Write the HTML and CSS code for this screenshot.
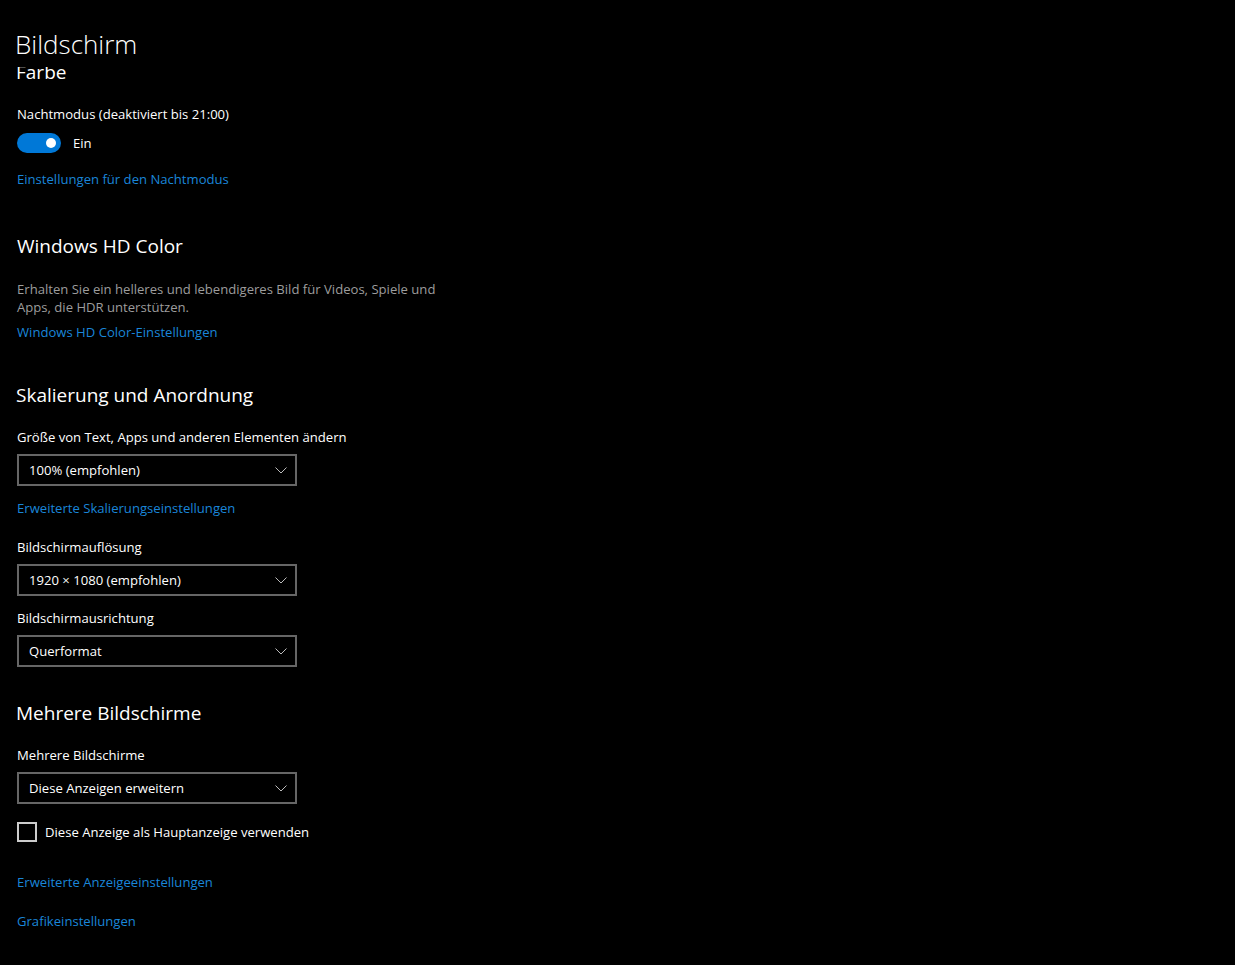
FILE: index.html
```html
<!DOCTYPE html>
<html lang="de">

<head>
    <meta charset="UTF-8">
    <meta name="viewport" content="width=device-width, initial-scale=1.0">
    <title>Bildschirm</title>
    <link rel="stylesheet" href="styles.css">
</head>

<body>
    <header class="page-header">
        <h1>Bildschirm</h1>
    </header>

    <main class="scroller">
        <div class="scroll-content">
            <h2 class="section-title first">Farbe</h2>

            <p class="label">Nachtmodus (deaktiviert bis 21:00)</p>
            <div class="toggle-row">
                <span class="toggle on"><span class="knob"></span></span>
                <span class="toggle-text">Ein</span>
            </div>
            <a class="link after-toggle" href="#">Einstellungen für den Nachtmodus</a>

            <h2 class="section-title hd">Windows HD Color</h2>
            <p class="description">Erhalten Sie ein helleres und lebendigeres Bild für Videos, Spiele und Apps, die HDR unterstützen.</p>
            <a class="link after-text" href="#">Windows HD Color-Einstellungen</a>

            <h2 class="section-title near">Skalierung und Anordnung</h2>
            <p class="label">Größe von Text, Apps und anderen Elementen ändern</p>
            <div class="dropdown">
                <span>100% (empfohlen)</span>
                <svg class="chevron" width="12" height="7" viewBox="0 0 12 7"><polyline points="0.5,0.5 6,6 11.5,0.5" /></svg>
            </div>
            <a class="link after-dropdown" href="#">Erweiterte Skalierungseinstellungen</a>

            <p class="label spaced">Bildschirmauflösung</p>
            <div class="dropdown">
                <span>1920 × 1080 (empfohlen)</span>
                <svg class="chevron" width="12" height="7" viewBox="0 0 12 7"><polyline points="0.5,0.5 6,6 11.5,0.5" /></svg>
            </div>

            <p class="label tight">Bildschirmausrichtung</p>
            <div class="dropdown">
                <span>Querformat</span>
                <svg class="chevron" width="12" height="7" viewBox="0 0 12 7"><polyline points="0.5,0.5 6,6 11.5,0.5" /></svg>
            </div>

            <h2 class="section-title nearer">Mehrere Bildschirme</h2>
            <p class="label">Mehrere Bildschirme</p>
            <div class="dropdown">
                <span>Diese Anzeigen erweitern</span>
                <svg class="chevron" width="12" height="7" viewBox="0 0 12 7"><polyline points="0.5,0.5 6,6 11.5,0.5" /></svg>
            </div>

            <label class="checkbox-row">
                <span class="checkbox"></span>
                <span>Diese Anzeige als Hauptanzeige verwenden</span>
            </label>

            <a class="link after-checkbox" href="#">Erweiterte Anzeigeeinstellungen</a>
            <a class="link last" href="#">Grafikeinstellungen</a>
        </div>
    </main>
</body>

</html>
```

FILE: styles.css
```css
body {
    margin: 0;
    height: 100vh;
    background: #000;
    color: #fff;
    font-family: "Open Sans", "Noto Sans", sans-serif;
    font-size: 13.1px;
    overflow: hidden;
}

.page-header {
    height: 67px;
    padding-left: 15px;
    box-sizing: border-box;
}

.page-header h1 {
    margin: 0;
    padding-top: 25px;
    font-size: 26px;
    font-weight: 300;
    line-height: 38px;
}

.scroller {
    height: calc(100vh - 67px);
    overflow: hidden;
}

.scroll-content {
    display: flex;
    flex-direction: column;
    align-items: flex-start;
    padding-left: 17px;
    margin-top: -9px;
}

.section-title {
    margin: 43px 0 0 -1px;
    font-size: 19px;
    font-weight: 400;
    line-height: 28px;
}

.section-title.first {
    margin-top: 0;
}

.section-title.hd {
    margin-left: 0;
}

.section-title.near {
    margin-top: 39px;
}

.section-title.nearer {
    margin-top: 32px;
}

.label {
    margin: 18px 0 0;
    line-height: 20px;
}

.label.spaced {
    margin-top: 19px;
}

.label.tight {
    margin-top: 12px;
}

.description {
    margin: 20px 0 0;
    width: 430px;
    line-height: 18px;
    color: #9d9d9d;
}

.link {
    margin-top: 16px;
    line-height: 20px;
    color: #1a86d9;
    text-decoration: none;
}

.link.after-text {
    margin-top: 6px;
}

.link.after-dropdown {
    margin-top: 12px;
}

.link.after-checkbox {
    margin-top: 30px;
}

.link.last {
    margin-top: 19px;
}

/* Toggle switch */
.toggle-row {
    display: flex;
    align-items: center;
    gap: 12px;
    margin-top: 9px;
    height: 20px;
}

.toggle {
    width: 44px;
    height: 20px;
    border-radius: 10px;
    background: #0078d7;
    display: flex;
    align-items: center;
    justify-content: flex-end;
    padding-right: 5px;
    box-sizing: border-box;
}

.knob {
    width: 10px;
    height: 10px;
    border-radius: 50%;
    background: #fff;
}

/* Dropdowns */
.dropdown {
    margin-top: 7px;
    width: 280px;
    height: 32px;
    box-sizing: border-box;
    border: 2px solid #666;
    display: flex;
    align-items: center;
    justify-content: space-between;
    padding: 0 8px 0 10px;
}

.chevron polyline {
    fill: none;
    stroke: #bdbdbd;
    stroke-width: 1;
}

/* Checkbox */
.checkbox-row {
    display: flex;
    align-items: center;
    gap: 8px;
    margin-top: 18px;
    line-height: 20px;
}

.checkbox {
    width: 20px;
    height: 20px;
    box-sizing: border-box;
    border: 2px solid #ccc;
}
```
